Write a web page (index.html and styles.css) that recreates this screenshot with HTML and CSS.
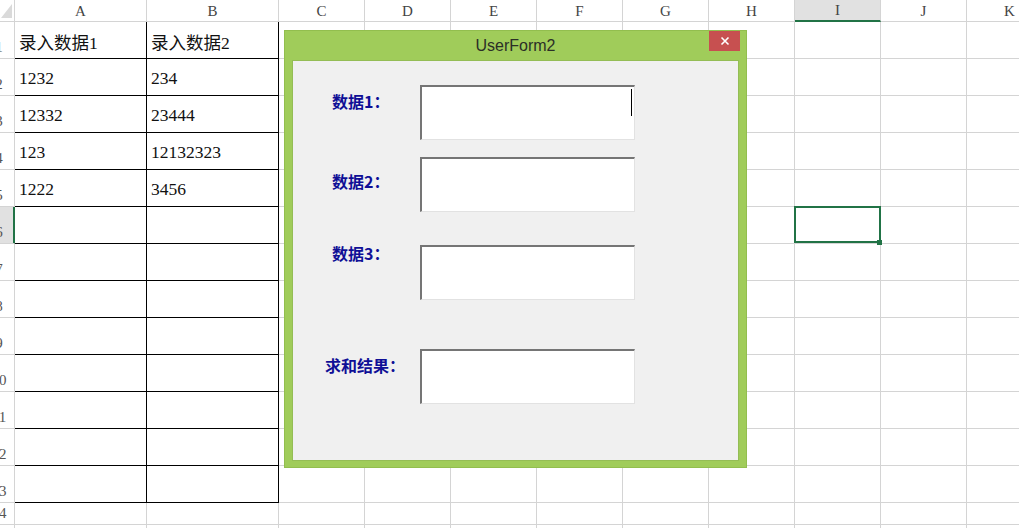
FILE: index.html
```html
<!DOCTYPE html>
<html lang="zh-CN">
<head>
<meta charset="utf-8">
<title>UserForm2</title>
<link rel="stylesheet" href="styles.css">
</head>
<body>
<div class="sheet">
  <div class="row hdr">
    <div class="corner"><span class="tri"></span></div>
    <div class="ch">A</div><div class="ch">B</div><div class="ch">C</div><div class="ch">D</div><div class="ch">E</div><div class="ch">F</div><div class="ch">G</div><div class="ch">H</div><div class="ch on">I</div><div class="ch">J</div><div class="ch">K</div>
  </div>
  <div class="row"><div class="rh"><span>1</span></div><div class="c b">录入数据1</div><div class="c b">录入数据2</div><div class="c"></div><div class="c"></div><div class="c"></div><div class="c"></div><div class="c"></div><div class="c"></div><div class="c"></div><div class="c"></div><div class="c"></div></div>
  <div class="row"><div class="rh"><span>2</span></div><div class="c b">1232</div><div class="c b">234</div><div class="c"></div><div class="c"></div><div class="c"></div><div class="c"></div><div class="c"></div><div class="c"></div><div class="c"></div><div class="c"></div><div class="c"></div></div>
  <div class="row"><div class="rh"><span>3</span></div><div class="c b">12332</div><div class="c b">23444</div><div class="c"></div><div class="c"></div><div class="c"></div><div class="c"></div><div class="c"></div><div class="c"></div><div class="c"></div><div class="c"></div><div class="c"></div></div>
  <div class="row"><div class="rh"><span>4</span></div><div class="c b">123</div><div class="c b">12132323</div><div class="c"></div><div class="c"></div><div class="c"></div><div class="c"></div><div class="c"></div><div class="c"></div><div class="c"></div><div class="c"></div><div class="c"></div></div>
  <div class="row"><div class="rh"><span>5</span></div><div class="c b">1222</div><div class="c b">3456</div><div class="c"></div><div class="c"></div><div class="c"></div><div class="c"></div><div class="c"></div><div class="c"></div><div class="c"></div><div class="c"></div><div class="c"></div></div>
  <div class="row"><div class="rh on"><span>6</span></div><div class="c b"></div><div class="c b"></div><div class="c"></div><div class="c"></div><div class="c"></div><div class="c"></div><div class="c"></div><div class="c"></div><div class="c sel"></div><div class="c"></div><div class="c"></div></div>
  <div class="row"><div class="rh"><span>7</span></div><div class="c b"></div><div class="c b"></div><div class="c"></div><div class="c"></div><div class="c"></div><div class="c"></div><div class="c"></div><div class="c"></div><div class="c"></div><div class="c"></div><div class="c"></div></div>
  <div class="row"><div class="rh"><span>8</span></div><div class="c b"></div><div class="c b"></div><div class="c"></div><div class="c"></div><div class="c"></div><div class="c"></div><div class="c"></div><div class="c"></div><div class="c"></div><div class="c"></div><div class="c"></div></div>
  <div class="row"><div class="rh"><span>9</span></div><div class="c b"></div><div class="c b"></div><div class="c"></div><div class="c"></div><div class="c"></div><div class="c"></div><div class="c"></div><div class="c"></div><div class="c"></div><div class="c"></div><div class="c"></div></div>
  <div class="row"><div class="rh"><span>10</span></div><div class="c b"></div><div class="c b"></div><div class="c"></div><div class="c"></div><div class="c"></div><div class="c"></div><div class="c"></div><div class="c"></div><div class="c"></div><div class="c"></div><div class="c"></div></div>
  <div class="row"><div class="rh"><span>11</span></div><div class="c b"></div><div class="c b"></div><div class="c"></div><div class="c"></div><div class="c"></div><div class="c"></div><div class="c"></div><div class="c"></div><div class="c"></div><div class="c"></div><div class="c"></div></div>
  <div class="row"><div class="rh"><span>12</span></div><div class="c b"></div><div class="c b"></div><div class="c"></div><div class="c"></div><div class="c"></div><div class="c"></div><div class="c"></div><div class="c"></div><div class="c"></div><div class="c"></div><div class="c"></div></div>
  <div class="row"><div class="rh"><span>13</span></div><div class="c b"></div><div class="c b"></div><div class="c"></div><div class="c"></div><div class="c"></div><div class="c"></div><div class="c"></div><div class="c"></div><div class="c"></div><div class="c"></div><div class="c"></div></div>
  <div class="row short"><div class="rh"><span>14</span></div><div class="c"></div><div class="c"></div><div class="c"></div><div class="c"></div><div class="c"></div><div class="c"></div><div class="c"></div><div class="c"></div><div class="c"></div><div class="c"></div><div class="c"></div></div>
  <div class="row"><div class="rh"><span>15</span></div><div class="c"></div><div class="c"></div><div class="c"></div><div class="c"></div><div class="c"></div><div class="c"></div><div class="c"></div><div class="c"></div><div class="c"></div><div class="c"></div><div class="c"></div></div>
</div>

<div class="form">
  <div class="title">UserForm2
    <div class="close"><svg width="10" height="10" viewBox="0 0 10 10"><path d="M1.5 1.5 L8.5 8.5 M8.5 1.5 L1.5 8.5" stroke="#fff" stroke-width="1.6" fill="none"/></svg></div>
  </div>
  <div class="panel">
    <div class="frow"><div class="lbl l1">数据1：</div><div class="tb"><span class="caret"></span></div></div>
    <div class="frow r2"><div class="lbl l2">数据2：</div><div class="tb"></div></div>
    <div class="frow r3"><div class="lbl l3">数据3：</div><div class="tb"></div></div>
    <div class="frow r4"><div class="lbl l4">求和结果：</div><div class="tb"></div></div>
  </div>
</div>
</body>
</html>
```
FILE: styles.css
```css
html, body {
  margin: 0;
  height: 100%;
  overflow: hidden;
  background: #fff;
}
body {
  position: relative;
  font-family: "Liberation Serif", "Noto Sans CJK SC", serif;
}
.sheet {
  display: flex;
  flex-direction: column;
}
.row {
  display: grid;
  grid-template-columns: 15px 132px 132px repeat(9, 86px);
  height: 37px;
  flex: none;
}
.row.hdr, .row.short { height: 22px; }
.row > * {
  box-sizing: border-box;
  border-right: 1px solid #d4d4d4;
  border-bottom: 1px solid #d4d4d4;
}
.corner {
  position: relative;
  display: flex;
  align-items: flex-end;
  justify-content: flex-end;
  padding: 0 2px 3px 0;
}
.tri {
  width: 11px;
  height: 14px;
  background: #dadada;
  clip-path: polygon(100% 0, 100% 100%, 0 100%);
}
.ch {
  display: flex;
  align-items: center;
  justify-content: center;
  font-size: 15px;
  color: #444;
  padding-top: 1px;
}
.ch.on {
  background: #e1e1e1;
  border-bottom: 2px solid #217346;
}
.rh {
  overflow: hidden;
  display: flex;
  align-items: flex-end;
  font-size: 15px;
  color: #555;
}
.rh span {
  flex: none;
  width: 30px;
  margin-left: -16px;
  text-align: center;
  line-height: 1;
  padding-bottom: 3px;
}
.rh.on {
  background: #e1e1e1;
  border-right-color: #217346;
  box-shadow: inset -1px 0 #217346;
}
.c {
  display: flex;
  align-items: center;
  padding: 3px 0 0 4px;
  font-size: 17.5px;
  color: #111;
  white-space: nowrap;
  overflow: hidden;
}
.c.b { border-color: #000; }
.c.sel {
  position: relative;
  overflow: visible;
  z-index: 2;
}
.c.sel::after {
  content: "";
  position: absolute;
  left: -1px;
  top: -1px;
  right: -1px;
  bottom: 0;
  border: 2px solid #217346;
}
.c.sel::before {
  content: "";
  position: absolute;
  right: -2px;
  bottom: -2px;
  width: 5px;
  height: 5px;
  background: #217346;
  z-index: 3;
}

/* UserForm */
.form {
  position: absolute;
  left: 284px;
  top: 30px;
  width: 463px;
  height: 438px;
  box-sizing: border-box;
  background: #a0cc5a;
  border: 1px solid #92be4e;
  padding: 0 7px 6px 7px;
  display: flex;
  flex-direction: column;
  z-index: 10;
}
.title {
  position: relative;
  height: 29px;
  flex: none;
  display: flex;
  align-items: center;
  justify-content: center;
  font: 16px "Liberation Sans", Arial, sans-serif;
  color: #2b2f27;
}
.close {
  position: absolute;
  right: -1px;
  top: 0;
  width: 31px;
  height: 20px;
  background: #c75050;
  display: flex;
  align-items: center;
  justify-content: center;
}
.close svg { display: block; }
.panel {
  flex: 1;
  box-sizing: border-box;
  background: #f0f0f0;
  border: 1px solid #94bd55;
  padding-top: 24px;
  display: flex;
  flex-direction: column;
}
.frow {
  display: flex;
  align-items: flex-start;
}
.frow.r2 { margin-top: 17px; }
.frow.r3 { margin-top: 33px; }
.frow.r4 { margin-top: 49px; }
.lbl {
  width: 127px;
  box-sizing: border-box;
  padding-left: 39px;
  font: bold 16px "Noto Sans CJK SC", sans-serif;
  line-height: 20px;
  color: #0f0f96;
  white-space: nowrap;
}
.lbl.l1 { margin-top: 6px; }
.lbl.l2 { margin-top: 14px; }
.lbl.l3 { margin-top: -2px; }
.lbl.l4 { margin-top: 6px; padding-left: 32px; }
.tb {
  width: 215px;
  height: 55px;
  box-sizing: border-box;
  background: #fff;
  border-top: 2px solid #757575;
  border-left: 2px solid #757575;
  border-right: 1px solid #e2e2e2;
  border-bottom: 1px solid #e2e2e2;
  display: flex;
}
.caret {
  width: 1px;
  height: 27px;
  background: #000;
  margin: 2px 2px 0 auto;
}
```
